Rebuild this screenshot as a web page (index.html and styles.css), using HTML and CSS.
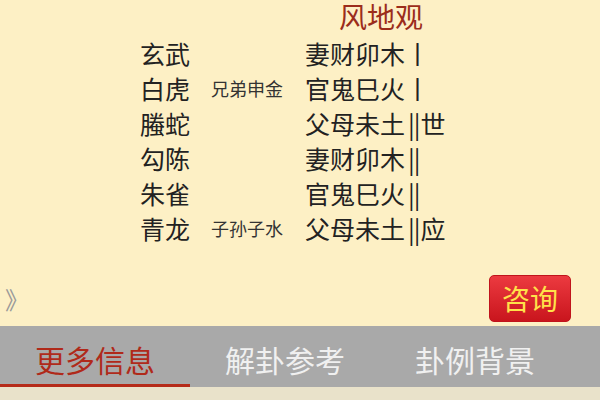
FILE: index.html
```html
<!DOCTYPE html>
<html lang="zh-CN">
<head>
    <meta charset="UTF-8">
    <meta name="viewport" content="width=device-width, initial-scale=1.0">
    <title>风地观</title>
    <link rel="stylesheet" href="styles.css">
</head>
<body>
    <div class="main">
        <div class="title">风地观</div>

        <div class="gua">
            <div class="shen">玄武</div>
            <div class="fu"></div>
            <div class="yao">妻财卯木丨</div>

            <div class="shen">白虎</div>
            <div class="fu">兄弟申金</div>
            <div class="yao">官鬼巳火丨</div>

            <div class="shen">螣蛇</div>
            <div class="fu"></div>
            <div class="yao">父母未土<span class="bar">||</span>世</div>

            <div class="shen">勾陈</div>
            <div class="fu"></div>
            <div class="yao">妻财卯木<span class="bar">||</span></div>

            <div class="shen">朱雀</div>
            <div class="fu"></div>
            <div class="yao">官鬼巳火<span class="bar">||</span></div>

            <div class="shen">青龙</div>
            <div class="fu">子孙子水</div>
            <div class="yao">父母未土<span class="bar">||</span>应</div>
        </div>

        <div class="footer">
            <span class="more">》</span>
            <button class="ask">咨询</button>
        </div>
    </div>

    <div class="tabs">
        <div class="tab active">更多信息</div>
        <div class="tab">解卦参考</div>
        <div class="tab">卦例背景</div>
    </div>
    <div class="bottom"></div>
</body>
</html>
```

FILE: styles.css
```css
* {
    margin: 0;
    padding: 0;
    box-sizing: border-box;
    font-family: 'Noto Sans CJK SC', 'Noto Sans', sans-serif;
}

body {
    width: 600px;
    height: 400px;
    background-color: #e9e2ca;
    overflow: hidden;
}

.main {
    height: 326px;
    background-color: #fdf0c5;
    display: flex;
    flex-direction: column;
}

.title {
    height: 36px;
    padding-left: 339px;
    font-size: 28px;
    line-height: 32px;
    color: #9b2d1b;
}

.gua {
    display: grid;
    grid-template-columns: 71px 94px 1fr;
    grid-auto-rows: 35px;
    padding-left: 140px;
    color: #222;
    align-items: center;
}

.shen,
.yao {
    font-size: 25px;
    line-height: 35px;
}

.bar {
    padding: 0 1px 0 3px;
    letter-spacing: -1px;
}

.fu {
    font-size: 18px;
    color: #333;
    line-height: 35px;
}

.footer {
    margin-top: auto;
    padding: 0 29px 4px 5px;
    display: flex;
    justify-content: space-between;
    align-items: center;
}

.more {
    font-size: 24px;
    color: #999;
}

.ask {
    width: 82px;
    height: 47px;
    border: 1px solid #c0141c;
    border-radius: 5px;
    background: linear-gradient(#ec3a40, #c9151d);
    color: #ffe24a;
    font-size: 28px;
    line-height: 45px;
    cursor: pointer;
}

.tabs {
    height: 61px;
    background-color: #a9a9a9;
    display: flex;
}

.tab {
    width: 190px;
    text-align: center;
    font-size: 30px;
    line-height: 49px;
    padding-top: 9px;
    border-bottom: 3px solid transparent;
    color: #f0f0f0;
}

.tab.active {
    color: #b02a1a;
    border-bottom-color: #b52b1a;
}

.bottom {
    height: 13px;
}
```
